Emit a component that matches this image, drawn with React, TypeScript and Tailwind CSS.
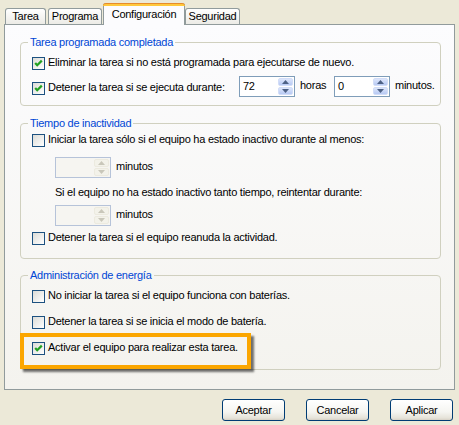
import React from 'react';

type Props = { children?: React.ReactNode };

function Check({ checked }: { checked?: boolean }) {
  return (
    <span className="w-[13px] h-[13px] shrink-0 border border-[#1c5180] bg-linear-to-br from-[#dcdcd7] to-white flex items-center justify-center">
      {checked && (
        <svg width="9" height="9" viewBox="0 0 9 9">
          <polyline points="1.2,4 3.2,6.2 7.8,1.6" fill="none" stroke="#21a121" strokeWidth="2.2" />
        </svg>
      )}
    </span>
  );
}

function Arrow({ up, disabled }: { up?: boolean; disabled?: boolean }) {
  return (
    <svg width="7" height="4" viewBox="0 0 7 4">
      <polygon points={up ? '3.5,0 7,4 0,4' : '0,0 7,0 3.5,4'} fill={disabled ? '#c9c7ba' : '#4d6185'} />
    </svg>
  );
}

function Spin({ value, disabled }: { value?: string; disabled?: boolean }) {
  const btn = disabled
    ? 'bg-[#f3f2ea] border-[#eceadf]'
    : 'bg-linear-to-b from-[#dde6fb] to-[#b7c9f3] border-[#d2ddf8]';
  return (
    <div
      className={`w-[56px] h-[21px] shrink-0 border flex p-[1px] ${disabled ? 'border-[#b6c3d9] bg-[#f6f5f1]' : 'border-[#7f9db9] bg-white'}`}
    >
      <span className="flex-1 pl-[2px] leading-[17px]">{value}</span>
      <div className="w-[15px] flex flex-col gap-[1px]">
        <div className={`flex-1 rounded-[2px] border flex items-center justify-center ${btn}`}>
          <Arrow up disabled={disabled} />
        </div>
        <div className={`flex-1 rounded-[2px] border flex items-center justify-center ${btn}`}>
          <Arrow disabled={disabled} />
        </div>
      </div>
    </div>
  );
}

function Row({ checked, children }: { checked?: boolean } & Props) {
  return (
    <div className="flex items-center h-[13px]">
      <Check checked={checked} />
      <span className="ml-[3px] leading-[13px] whitespace-nowrap relative -top-[1px]">{children}</span>
    </div>
  );
}

function Group({ title, className, children }: { title: string; className?: string } & Props) {
  return (
    <fieldset className={`border border-[#d0d0bf] rounded-[4px] pl-[11px] ${className ?? ''}`}>
      <legend className="-ml-[4px] px-[2px] leading-[14px] text-[#0046d5]">{title}</legend>
      {children}
    </fieldset>
  );
}

function Tab({ label, active, className }: { label: string; active?: boolean; className?: string }) {
  if (active) {
    return (
      <div className={`relative z-10 h-[22px] -mb-px flex flex-col bg-[#fcfcfe] border-x border-[#919b9c] rounded-t-[3px] ${className ?? ''}`}>
        <div className="h-[3px] -mx-px rounded-t-[3px] bg-[#ffc83c] border-t border-[#e68b2c]" />
        <div className="flex-1 flex items-center justify-center pb-[2px]">{label}</div>
      </div>
    );
  }
  return (
    <div
      className={`h-[16px] flex items-center justify-center border-x border-t border-[#919b9c] rounded-t-[3px] bg-linear-to-b from-white to-[#ecebe6] ${className ?? ''}`}
    >
      {label}
    </div>
  );
}

function Btn({ children }: Props) {
  return (
    <button className="w-[63px] h-[22px] border border-[#003c74] rounded-[3px] bg-[linear-gradient(180deg,#ffffff_0%,#f5f5f1_60%,#e6e3d9_90%,#d6d0c5_100%)] leading-[20px] text-center">
      {children}
    </button>
  );
}

export default function App() {
  return (
    <div className="w-[459px] h-[425px] bg-[#ece9d8] text-black text-[11px] tracking-[-0.25px] font-['Liberation_Sans',Arial,sans-serif] relative overflow-hidden">
      {/* tabs */}
      <div className="h-[24px] flex items-end">
        <Tab label="Tarea" className="ml-[5px] w-[41px]" />
        <Tab label="Programa" className="ml-[2px] w-[54px]" />
        <Tab label="Configuración" active className="ml-px w-[82px]" />
        <Tab label="Seguridad" className="w-[55px]" />
      </div>

      {/* panel */}
      <div className="mx-[4px] h-[366px] border border-[#919b9c] bg-linear-to-b from-[#fcfcfe] to-[#f4f3ee] pl-[15px] pr-[13px] pt-[10px]">
        <Group title="Tarea programada completada" className="pb-[8px]">
          <div className="mt-[8px]">
            <Row checked>Eliminar la tarea si no está programada para ejecutarse de nuevo.</Row>
          </div>
          <div className="mt-[6px] h-[21px] flex items-center">
            <div className="w-[207px] relative top-[2px]">
              <Row checked>Detener la tarea si se ejecuta durante:</Row>
            </div>
            <Spin value="72" />
            <span className="ml-[5px] w-[34px] relative -top-[1px]">horas</span>
            <Spin value="0" />
            <span className="ml-[5px] relative -top-[1px]">minutos.</span>
          </div>
        </Group>

        <Group title="Tiempo de inactividad" className="mt-[10px] pb-[13px]">
          <div className="mt-[4px]">
            <Row>Iniciar la tarea sólo si el equipo ha estado inactivo durante al menos:</Row>
          </div>
          <div className="mt-[10px] ml-[23px] flex items-center">
            <Spin disabled />
            <span className="ml-[5px] relative -top-[1px]">minutos</span>
          </div>
          <div className="mt-[8px] ml-[23px] leading-[13px]">
            Si el equipo no ha estado inactivo tanto tiempo, reintentar durante:
          </div>
          <div className="mt-[6px] ml-[23px] flex items-center">
            <Spin disabled />
            <span className="ml-[5px] relative -top-[1px]">minutos</span>
          </div>
          <div className="mt-[6px]">
            <Row>Detener la tarea si el equipo reanuda la actividad.</Row>
          </div>
        </Group>

        <Group title="Administración de energía" className="mt-[9px] pb-[14px]">
          <div className="mt-[8px]">
            <Row>No iniciar la tarea si el equipo funciona con baterías.</Row>
          </div>
          <div className="mt-[13px]">
            <Row>Detener la tarea si se inicia el modo de batería.</Row>
          </div>
          <div className="mt-[13px]">
            <Row checked>Activar el equipo para realizar esta tarea.</Row>
          </div>
        </Group>
      </div>

      {/* buttons */}
      <div className="mt-[9px] pr-[6px] flex justify-end gap-[21px]">
        <Btn>Aceptar</Btn>
        <Btn>Cancelar</Btn>
        <Btn>Aplicar</Btn>
      </div>

      {/* highlight annotation */}
      <div className="absolute left-[20px] top-[333px] w-[231px] h-[36px] border-[4px] border-[#fba600] shadow-[3px_3px_2px_rgba(0,0,0,0.55)]" />
    </div>
  );
}
